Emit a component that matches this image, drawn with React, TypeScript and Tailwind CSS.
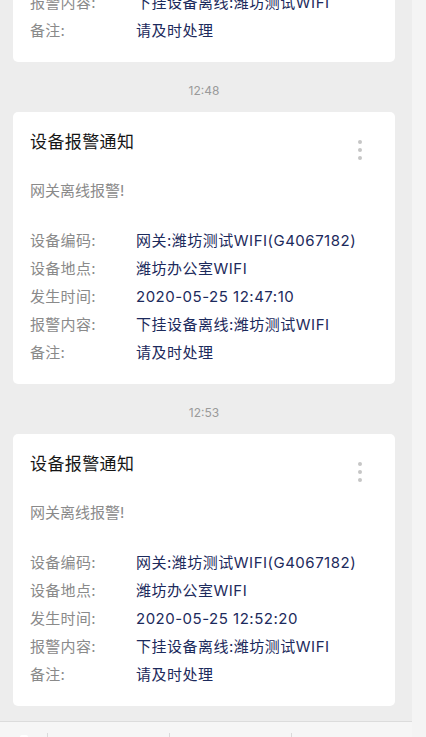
import React from "react";

type Alarm = {
  time: string;
  code: string;
  place: string;
  happen: string;
  content: string;
  note: string;
};

const alarms: Alarm[] = [
  {
    time: "",
    code: "网关:潍坊测试WIFI(G4067182)",
    place: "潍坊办公室WIFI",
    happen: "2020-05-25 12:40:05",
    content: "下挂设备离线:潍坊测试WIFI",
    note: "请及时处理",
  },
  {
    time: "12:48",
    code: "网关:潍坊测试WIFI(G4067182)",
    place: "潍坊办公室WIFI",
    happen: "2020-05-25 12:47:10",
    content: "下挂设备离线:潍坊测试WIFI",
    note: "请及时处理",
  },
  {
    time: "12:53",
    code: "网关:潍坊测试WIFI(G4067182)",
    place: "潍坊办公室WIFI",
    happen: "2020-05-25 12:52:20",
    content: "下挂设备离线:潍坊测试WIFI",
    note: "请及时处理",
  },
];

function Row({ label, value }: { label: string; value: string }) {
  return (
    <div className="flex h-[28px] items-center overflow-hidden text-[15px] leading-[28px]">
      <div className="w-[106px] shrink-0 tracking-[0.3px] text-[#8a8a8a]">{label}</div>
      <div className="tracking-[0.5px] text-[#1c2a5c]">{value}</div>
    </div>
  );
}

function Card({ a, first }: { a: Alarm; first?: boolean }) {
  return (
    <div
      className={`h-[272px] shrink-0 overflow-hidden rounded-[5px] bg-white pl-[17px] pr-[17px] pt-[18px] ${
        first ? "-mt-[210px]" : ""
      }`}
    >
      <div className="flex h-[24px] items-start justify-between">
        <div className="h-[24px] text-[17px] leading-[24px] tracking-[0.4px] text-[#141414]">设备报警通知</div>
        <div className="mr-[16px] mt-[10px] flex flex-col gap-[4px]">
          <span className="block h-[4px] w-[4px] rounded-full bg-[#c6c6c6]" />
          <span className="block h-[4px] w-[4px] rounded-full bg-[#c6c6c6]" />
          <span className="block h-[4px] w-[4px] rounded-full bg-[#c6c6c6]" />
        </div>
      </div>
      <div className="mt-[26px] flex h-[22px] items-center text-[15px] leading-[22px] text-[#8a8a8a]">
        网关离线报警!
      </div>
      <div className="mt-[25px] flex flex-col">
        <Row label="设备编码:" value={a.code} />
        <Row label="设备地点:" value={a.place} />
        <Row label="发生时间:" value={a.happen} />
        <Row label="报警内容:" value={a.content} />
        <Row label="备注:" value={a.note} />
      </div>
    </div>
  );
}

export default function App() {
  return (
    <div
      className="flex h-[737px] w-[426px] overflow-hidden bg-[#f4f4f4]"
      style={{ fontFamily: '"Inter", "Noto Sans CJK SC", sans-serif' }}
    >
      <div className="flex h-[737px] w-[412px] flex-col">
        <div className="flex h-[721px] shrink-0 flex-col overflow-hidden bg-[#ededed] pl-[13px] pr-[17px]">
          {alarms.map((a, i) => (
            <React.Fragment key={i}>
              {i > 0 && (
                <div className="flex h-[50px] shrink-0 items-start justify-center pt-[20px] text-[12px] leading-[20px] text-[#9a9a9a]">
                  <span className="h-[20px] -mt-[1px]">{a.time}</span>
                </div>
              )}
              <Card a={a} first={i === 0} />
            </React.Fragment>
          ))}
        </div>
        <div className="flex min-h-0 flex-1 overflow-hidden border-t border-[#dcdcdc] bg-[#f6f6f6]">
          <div className="flex w-[47px] shrink-0 justify-center pt-[13px]">
            <div className="h-[10px] w-[8px] rounded-t-[2px] bg-white" />
          </div>
          <div className="mt-[11px] h-[24px] w-px shrink-0 bg-[#dadada]" />
          <div className="w-[121px] shrink-0" />
          <div className="mt-[11px] h-[24px] w-px shrink-0 bg-[#dadada]" />
          <div className="w-[121px] shrink-0" />
          <div className="mt-[11px] h-[24px] w-px shrink-0 bg-[#dadada]" />
          <div className="flex-1" />
        </div>
      </div>
      <div className="w-[14px] bg-[#f4f4f4]" />
    </div>
  );
}
